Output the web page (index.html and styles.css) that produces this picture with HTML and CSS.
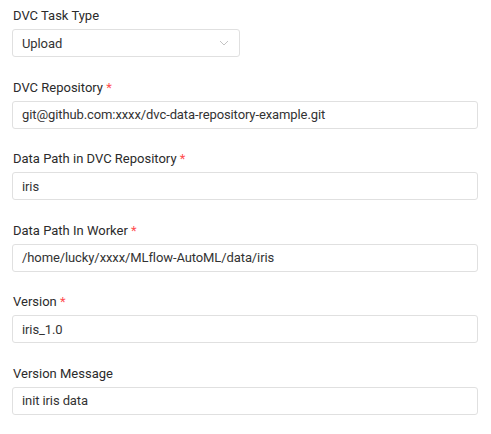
FILE: index.html
```html
<!DOCTYPE html>
<html>
<head>
<meta charset="utf-8">
<link rel="stylesheet" href="styles.css">
</head>
<body>
<form class="form">
  <div class="field">
    <div class="label">DVC Task Type</div>
    <div class="select">
      <span>Upload</span>
      <svg class="chevron" width="10" height="6" viewBox="0 0 10 6"><path d="M1 1l4 4 4-4" fill="none" stroke="#c4c4c4" stroke-width="1"/></svg>
    </div>
  </div>
  <div class="field">
    <div class="label">DVC Repository <span class="req">*</span></div>
    <div class="input">git@github.com:xxxx/dvc-data-repository-example.git</div>
  </div>
  <div class="field">
    <div class="label">Data Path in DVC Repository <span class="req">*</span></div>
    <div class="input">iris</div>
  </div>
  <div class="field">
    <div class="label">Data Path In Worker <span class="req">*</span></div>
    <div class="input">/home/lucky/xxxx/MLflow-AutoML/data/iris</div>
  </div>
  <div class="field">
    <div class="label">Version <span class="req">*</span></div>
    <div class="input">iris_1.0</div>
  </div>
  <div class="field">
    <div class="label">Version Message</div>
    <div class="input">init iris data</div>
  </div>
</form>
</body>
</html>
```
FILE: styles.css
```css
html, body {
  margin: 0;
  background: #ffffff;
}
body {
  font-family: Roboto, "Liberation Sans", sans-serif;
  font-size: 13px;
  color: #333333;
}
.form {
  padding: 7px 13px 0 12px;
  display: flex;
  flex-direction: column;
  gap: 21.5px;
}
.field {
  display: flex;
  flex-direction: column;
  gap: 4px;
}
.label {
  line-height: 18px;
  height: 18px;
  color: #2b2b2b;
  padding-left: 1px;
}
.req {
  color: #ff4d4f;
}
.select, .input {
  box-sizing: border-box;
  height: 28px;
  border: 1px solid #e0e0e0;
  border-radius: 3px;
  padding: 0 9px;
  display: flex;
  align-items: center;
  color: #333333;
  letter-spacing: -0.1px;
}
.select {
  width: 228px;
  justify-content: space-between;
}
.chevron {
  margin-right: 1px;
}
```
